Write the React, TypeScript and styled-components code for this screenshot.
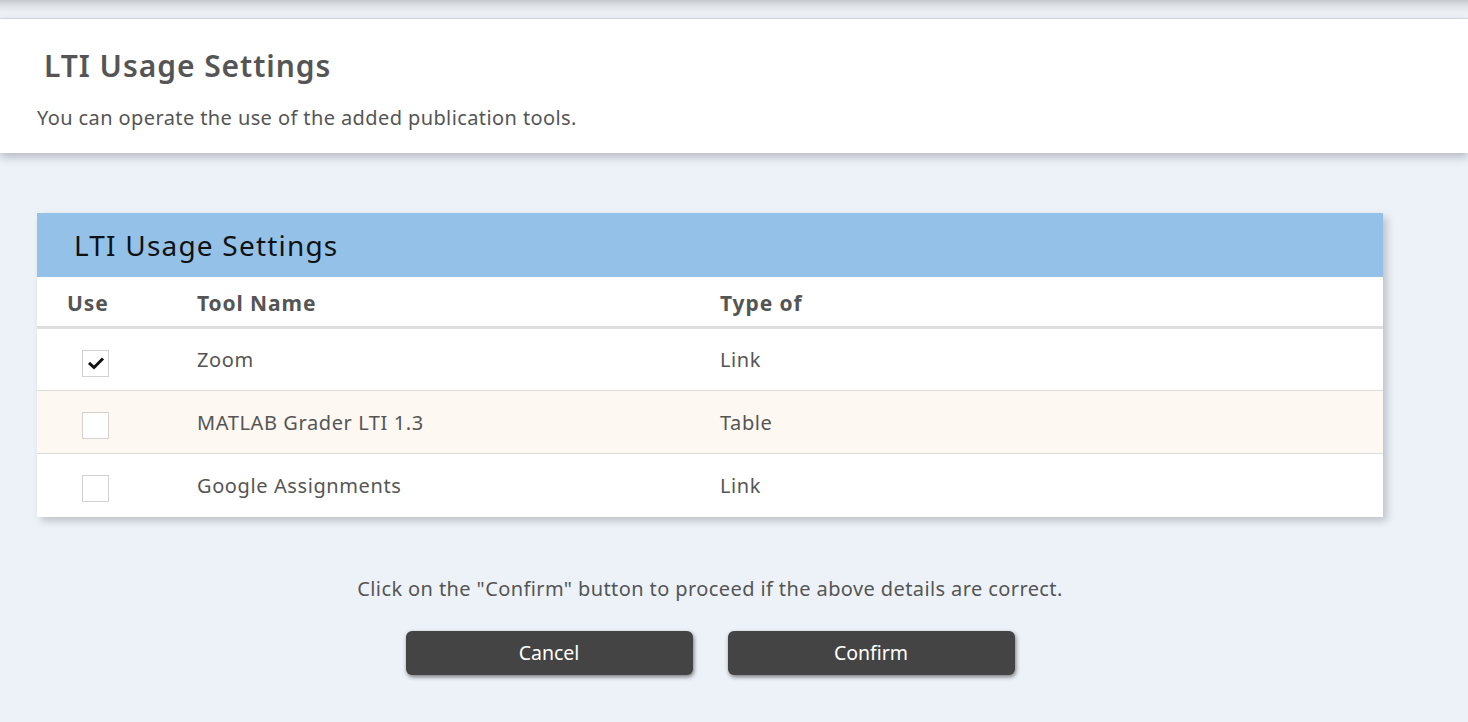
import React from "react";
import styled, { createGlobalStyle } from "styled-components";

const Global = createGlobalStyle`
  html, body { margin: 0; padding: 0; }
  body {
    background: #edf2f9;
    font-family: "Noto Sans", "Liberation Sans", sans-serif;
    color: #555;
  }
`;

const Page = styled.div`
  min-height: 722px;
  background: #edf2f9;
  overflow: hidden;
`;

const TopShade = styled.div`
  height: 18px;
  background: linear-gradient(#c4c7cb 0px, #dfe2e6 6px, #edf1f6 13px, #edf2f9 18px);
  border-bottom: 1px solid #d5dde6;
`;

const Header = styled.header`
  background: #fff;
  height: 134px;
  padding: 0 0 0 37px;
  box-shadow: 0 4px 9px rgba(0, 0, 0, 0.24);
  display: flex;
  flex-direction: column;
`;

const PageTitle = styled.h1`
  margin: 29px 0 0 7px;
  font-size: 30px;
  line-height: 36px;
  font-weight: 600;
  letter-spacing: 0.95px;
  color: #555;
`;

const Lead = styled.p`
  margin: 20px 0 0;
  font-size: 20px;
  line-height: 28px;
  letter-spacing: 0.4px;
  color: #555;
`;

const Main = styled.main`
  width: 1346px;
  padding: 60px 0 0 37px;
  display: flex;
  flex-direction: column;
  align-items: center;
`;

const Card = styled.section`
  width: 100%;
  background: #fff;
  box-shadow: 4px 4px 8px rgba(0, 0, 0, 0.2);
`;

const CardTitle = styled.h2`
  margin: 0;
  height: 64px;
  padding-left: 37px;
  display: flex;
  align-items: center;
  background: #94c1e8;
  font-size: 28px;
  font-weight: 400;
  letter-spacing: 1.2px;
  color: #111;
`;

const Table = styled.table`
  width: 100%;
  border-collapse: collapse;
  table-layout: fixed;
`;

const HeadCell = styled.th<{ $w?: number; $pad?: number }>`
  text-align: left;
  font-size: 21px;
  font-weight: 700;
  letter-spacing: 0.9px;
  color: #555;
  height: 47px;
  padding: 2px 0 0 ${(p) => p.$pad ?? 0}px;
  border-bottom: 3px solid #dedede;
  width: ${(p) => (p.$w ? `${p.$w}px` : "auto")};
`;

const Row = styled.tr<{ $alt?: boolean }>`
  height: 63px;
  background: ${(p) => (p.$alt ? "#fdf8f2" : "#fff")};
  border-bottom: 1px solid #dcdcdc;
  &:last-child { border-bottom: none; }
`;

const Cell = styled.td`
  font-size: 20px;
  letter-spacing: 0.6px;
  color: #555;
  padding: 0;
  vertical-align: middle;
`;

const CheckCell = styled.td`
  padding: 7px 0 0 45px;
  vertical-align: middle;
`;

const Box = styled.span`
  width: 25px;
  height: 25px;
  border: 1px solid #d2d2d2;
  background: #fff;
  display: flex;
  align-items: center;
  justify-content: center;
`;

const Note = styled.p`
  margin: 58px 0 0;
  font-size: 20px;
  letter-spacing: 0.4px;
  color: #555;
  text-align: center;
`;

const Actions = styled.div`
  margin-top: 29px;
  display: flex;
  gap: 35px;
`;

const Button = styled.button`
  width: 287px;
  height: 44px;
  border: none;
  border-radius: 6px;
  background: #444;
  color: #fff;
  font-family: "Noto Sans", "Liberation Sans", sans-serif;
  font-size: 19.5px;
  box-shadow: 1px 2px 4px rgba(0, 0, 0, 0.5);
  cursor: pointer;
`;

const tools = [
  { name: "Zoom", type: "Link", on: true },
  { name: "MATLAB Grader LTI 1.3", type: "Table", on: false },
  { name: "Google Assignments", type: "Link", on: false },
];

const Check = () => (
  <svg width="18" height="14" viewBox="0 0 18 14">
    <path d="M2 6.8 L7 11.5 L16 2.5" fill="none" stroke="#111" strokeWidth="3" />
  </svg>
);

export default function App() {
  return (
    <Page>
      <Global />
      <TopShade />
      <Header>
        <PageTitle>LTI Usage Settings</PageTitle>
        <Lead>You can operate the use of the added publication tools.</Lead>
      </Header>
      <Main>
        <Card>
          <CardTitle>LTI Usage Settings</CardTitle>
          <Table>
            <thead>
              <tr>
                <HeadCell $w={130} $pad={30}>Use</HeadCell>
                <HeadCell $w={523}>Tool Name</HeadCell>
                <HeadCell>Type of</HeadCell>
              </tr>
            </thead>
            <tbody>
              {tools.map((t, i) => (
                <Row key={t.name} $alt={i === 1}>
                  <CheckCell>
                    <Box>{t.on && <Check />}</Box>
                  </CheckCell>
                  <Cell>{t.name}</Cell>
                  <Cell>{t.type}</Cell>
                </Row>
              ))}
            </tbody>
          </Table>
        </Card>
        <Note>Click on the "Confirm" button to proceed if the above details are correct.</Note>
        <Actions>
          <Button>Cancel</Button>
          <Button>Confirm</Button>
        </Actions>
      </Main>
    </Page>
  );
}
